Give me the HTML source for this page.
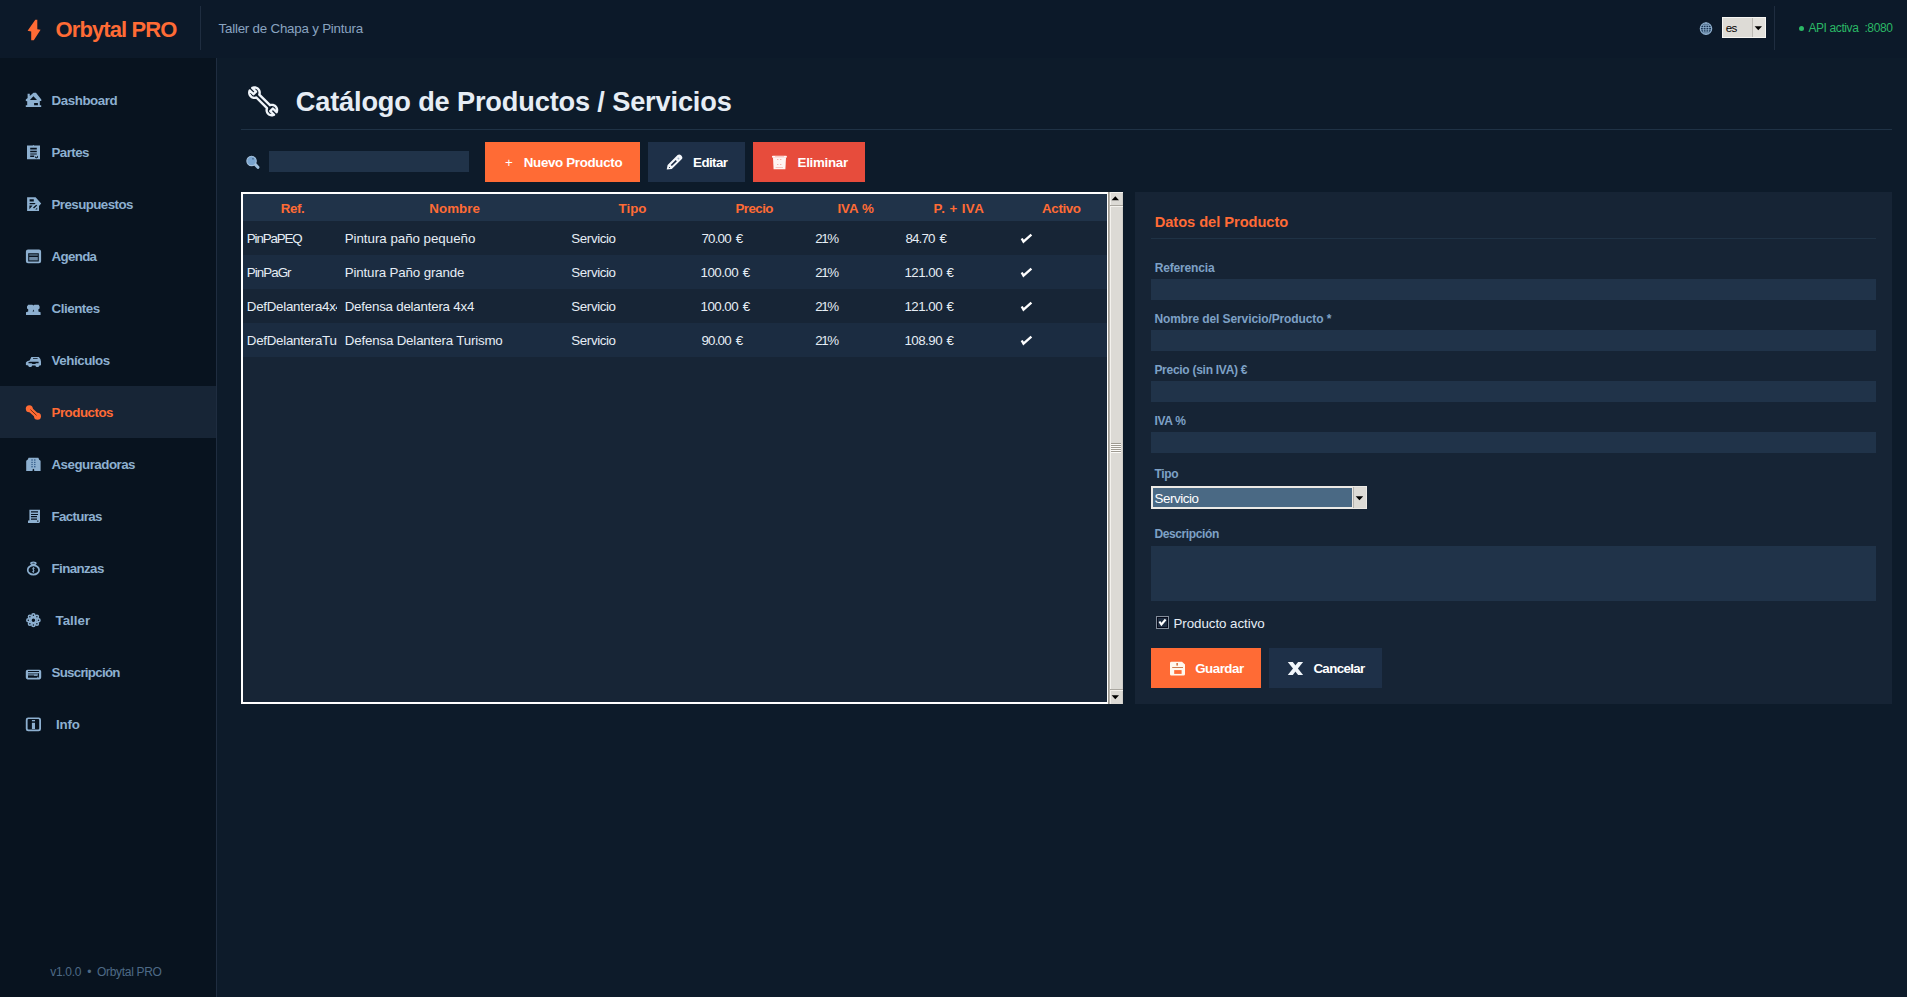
<!DOCTYPE html>
<html lang="es"><head><meta charset="utf-8"><title>Orbytal PRO</title>
<style>
html,body{margin:0;padding:0;background:#0d1b2a;}
body{width:1907px;height:997px;overflow:hidden;font-family:"Liberation Sans",sans-serif;}
#app{position:relative;width:1907px;height:997px;background:#0d1b2a;overflow:hidden;}
#app div,#app svg{position:absolute;}
.t{white-space:pre;line-height:1;}

</style></head>
<body>
<div id="app">
<div style="left:0;top:0;width:1907px;height:58px;background:#0c1929;"></div>
<div style="left:0;top:58px;width:216px;height:939px;background:#08131f;"></div>
<div style="left:216px;top:58px;width:1px;height:939px;background:#1f2d40;"></div>
<div style="left:200px;top:6px;width:1px;height:44px;background:#1f2d40;"></div>
<div style="left:1774px;top:6px;width:1px;height:44px;background:#1f2d40;"></div>
<div style="left:0;top:386px;width:216px;height:52px;background:#172536;"></div>
<!-- title separator -->
<div style="left:241px;top:129px;width:1651px;height:1px;background:#1f3245;"></div>
<!-- search -->
<div style="left:269px;top:151px;width:200px;height:21px;background:#203349;"></div>
<!-- buttons -->
<div style="left:485px;top:142px;width:155px;height:40px;background:#ff6b35;"></div>
<div style="left:648px;top:142px;width:97px;height:40px;background:#1e3048;"></div>
<div style="left:753px;top:142px;width:112px;height:40px;background:#e74c3c;"></div>
<!-- table -->
<div style="left:241px;top:192px;width:868px;height:512px;background:#ffffff;"></div>
<div style="left:243px;top:194px;width:864px;height:508px;background:#172536;"></div>
<div style="left:243px;top:194px;width:864px;height:27px;background:#203349;"></div>
<div style="left:243px;top:255px;width:864px;height:34px;background:#1b2c41;"></div>
<div style="left:243px;top:323px;width:864px;height:34px;background:#1b2c41;"></div>
<!-- panel -->
<div style="left:1135px;top:192px;width:757px;height:512px;background:#162435;"></div>
<div style="left:1151px;top:238px;width:725px;height:1px;background:#1f3245;"></div>
<div style="left:1151px;top:279px;width:725px;height:21px;background:#203349;"></div>
<div style="left:1151px;top:330px;width:725px;height:21px;background:#203349;"></div>
<div style="left:1151px;top:381px;width:725px;height:21px;background:#203349;"></div>
<div style="left:1151px;top:432px;width:725px;height:21px;background:#203349;"></div>
<div style="left:1151px;top:546px;width:725px;height:55px;background:#203349;"></div>
<div style="left:1151px;top:648px;width:110px;height:40px;background:#ff6b35;"></div>
<div style="left:1269px;top:648px;width:113px;height:40px;background:#1e3048;"></div>
<!-- bolt -->
<svg style="left:20px;top:12px;" width="30" height="34" viewBox="20 12 30 34"><polygon fill="#ff6b35" points="35.3,19.7 37.3,19.7 37.3,29.2 40.6,29.7 33.8,40.3 31.2,40.3 31.2,31.4 27.6,30.7"/></svg>
<!-- house -->
<svg style="left:21px;top:88px;" width="24" height="24" viewBox="21 88 24 24" fill="#8db0d0">
<path fill-rule="evenodd" d="M33.5 92.8 L36 92.8 L41.3 99.6 L41.3 101 L39.8 101 L39.8 105.2 L41.2 105.2 L41.2 107 L25.8 107 L25.8 105.2 L27.2 105.2 L27.2 101.2 L25.8 101 L25.8 99.6 L27.6 98 L27.6 93.8 L29.8 93.8 L29.8 96 Z M33.4 96.2 L29.9 99.9 L37 99.9 Z M34.1 103 L34.1 105.2 L37.9 105.2 L37.9 103 Z"/>
</svg>
<!-- clipboard -->
<svg style="left:21px;top:140px;" width="24" height="24" viewBox="21 140 24 24" fill="#8db0d0">
<path fill-rule="evenodd" d="M27 145.6 L32.6 145.6 L33.4 145 L34.2 145.6 L40 145.6 L40 159.3 L27 159.3 Z M30.2 147.8 L30.2 149.6 L36.8 149.6 L36.8 147.8 Z M30.2 150.8 L30.2 152.2 L36.8 152.2 L36.8 150.8 Z M30.2 153.4 L30.2 154.6 L36.8 154.6 L36.8 153.4 Z M30.2 155.6 L30.2 157 L34.2 157 L34.2 155.6 Z M35 156 L36.2 157.6 L38 155.6 L38 157.4 L36.2 158.6 L35 157.4Z"/>
</svg>
<!-- memo -->
<svg style="left:21px;top:192px;" width="24" height="24" viewBox="21 192 24 24" fill="#8db0d0">
<path fill-rule="evenodd" d="M27.1 197.2 L35.6 197.2 L41.2 203.4 L39 206 L39 211.1 L27.1 211.1 Z M29.6 199.3 L29.6 201.6 L33.8 201.6 L33.8 199.3 Z M29.6 203 L29.6 204.2 L34.6 204.2 L35.6 203 Z M29.4 205.6 L29.4 209.2 L32.6 205.6 Z M33 207.6 L34 208.4 L37.2 205.6 L36.2 204.8 Z M35.2 209.6 L37.2 209.6 L37.2 207.8 Z"/>
</svg>
<!-- calendar -->
<svg style="left:21px;top:244px;" width="24" height="24" viewBox="21 244 24 24" fill="#8db0d0">
<path fill-rule="evenodd" d="M28 249.5 H39 a2.1 2.1 0 0 1 2.1 2.1 V261.2 a2.1 2.1 0 0 1 -2.1 2.1 H28 a2.1 2.1 0 0 1 -2.1 -2.1 V251.6 a2.1 2.1 0 0 1 2.1 -2.1 Z M28.2 253.2 V261.4 H38.8 V253.2 Z"/>
<rect x="29.2" y="254.2" width="8.6" height="1.6" opacity="0.55"/>
<rect x="29.2" y="257" width="8.6" height="3.4" opacity="0.75"/>
</svg>
<!-- clients -->
<svg style="left:21px;top:296px;" width="24" height="24" viewBox="21 296 24 24" fill="#8db0d0">
<path d="M28.2 304.7 H32.4 L33.4 305.6 L34.4 304.7 H38.6 L39.6 306.4 V308.4 L38.4 309.2 V311.4 L40.6 312.2 V315 H26 V312.2 L28.2 311.4 V309.2 L27 308.4 V306.4 Z M33.4 309.6 L32.6 311.4 H34.2 Z" fill-rule="evenodd"/>
</svg>
<!-- car -->
<svg style="left:21px;top:348px;" width="24" height="24" viewBox="21 348 24 24" fill="#8db0d0">
<path fill-rule="evenodd" d="M31.4 356.9 H38.8 L40.4 359 L41 361.4 V365.2 L39.4 365.4 C39.2 366.6 38.2 366.9 37.4 366.9 C36.4 366.9 35.6 366.4 35.4 365.4 H32.2 C32 366.6 31 366.9 30.2 366.9 C29.2 366.9 28.4 366.4 28.2 365.4 L25.9 365 V362.4 L27.2 361.2 L29.6 360.4 Z M33 358.2 V359 H37.6 V358.2 Z M28.4 362.2 L28.4 363.3 L31.6 363.3 L32.4 364 H35.2 L36 363.3 H38.6 V361.8 H30 Z"/>
</svg>
<!-- small wrench (active) -->
<svg style="left:21px;top:400px;" width="24" height="24" viewBox="21 400 24 24">
<g fill="#ff6b35"><circle cx="29.3" cy="408.8" r="3.5"/><circle cx="37.5" cy="416.3" r="3.5"/><polygon points="30.6,406.6 40.2,415.4 36.4,418.6 26.8,409.8"/></g>
<line x1="30.4" y1="409.6" x2="36.6" y2="415.4" stroke="#6b2408" stroke-width="0.9"/>
</svg>
<!-- building -->
<svg style="left:21px;top:452px;" width="24" height="24" viewBox="21 452 24 24" fill="#8db0d0">
<path fill-rule="evenodd" d="M28.6 457.8 H38.4 L39.2 459.8 L40.6 460.8 V471 H34.2 V469.4 L33.4 468.8 L32.6 469.4 V471 H26.2 V460.8 L27.6 459.8 Z"/>
<g fill="#3d6591"><rect x="31.3" y="459.3" width="1.5" height="1.4"/><rect x="34" y="459.3" width="1.5" height="1.4"/><rect x="31.3" y="461.8" width="1.5" height="1.2"/><rect x="34" y="461.8" width="1.5" height="1.2"/><rect x="31.3" y="463.9" width="1.5" height="1.2"/><rect x="34" y="463.9" width="1.5" height="1.2"/><rect x="31.3" y="466" width="1.5" height="1.4"/><rect x="34" y="466" width="1.5" height="1.4"/></g>
</svg>
<!-- receipt -->
<svg style="left:21px;top:504px;" width="24" height="24" viewBox="21 504 24 24" fill="#8db0d0">
<path fill-rule="evenodd" d="M29.4 509.8 H40 V522 L39 523.1 H28 V520.4 H29.4 Z M31 511.2 V512.6 H38 V511.2 Z M31 514 V515 H38 V514 Z M31 516 V517.2 H37 V516 Z M31 518.6 V519.8 H37 V518.6 Z M37.2 520.4 V521.8 H38.4 V520.4Z"/>
</svg>
<!-- money bag -->
<svg style="left:21px;top:556px;" width="24" height="24" viewBox="21 556 24 24" fill="none" stroke="#8db0d0">
<ellipse cx="33.4" cy="570" rx="5.7" ry="4.6" stroke-width="1.7"/>
<path d="M30.6 566 L32.4 564.6 H34.4 L36.2 566" stroke-width="1.5"/>
<ellipse cx="33.4" cy="563.3" rx="2.6" ry="1.1" stroke-width="1.3"/>
<path d="M34.6 568.4 C33 567.4 32 568.6 33.4 569.8 C34.8 570.8 33.8 572.4 32.2 571.4 M33.4 567.2 V572.8" stroke-width="0.9"/>
</svg>
<!-- gear/flower -->
<svg style="left:21px;top:608px;" width="24" height="24" viewBox="21 608 24 24" fill="none" stroke="#8db0d0" stroke-width="1.5">
<g transform="translate(33.4 620.2)">
<circle r="2.6" stroke-width="1.7"/>
<circle cx="0" cy="-4.9" r="1.5"/><circle cx="3.5" cy="-3.5" r="1.5"/><circle cx="5.1" cy="0" r="1.5"/><circle cx="3.5" cy="3.5" r="1.5"/>
<circle cx="0" cy="4.9" r="1.5"/><circle cx="-3.5" cy="3.5" r="1.5"/><circle cx="-5.1" cy="0" r="1.5"/><circle cx="-3.5" cy="-3.5" r="1.5"/>
</g>
</svg>
<!-- card -->
<svg style="left:21px;top:660px;" width="24" height="24" viewBox="21 660 24 24" fill="#8db0d0">
<path fill-rule="evenodd" d="M27.6 669.8 H39.4 a1.8 1.8 0 0 1 1.8 1.8 V677.6 a1.8 1.8 0 0 1 -1.8 1.8 H27.6 a1.8 1.8 0 0 1 -1.8 -1.8 V671.6 a1.8 1.8 0 0 1 1.8 -1.8 Z M28 671 V672 H39 V671 Z M28 673.2 V677.8 H39 V673.2 Z"/>
<rect x="28" y="673.4" width="10" height="2.2" opacity="0.6"/>
<rect x="34" y="674.6" width="3.4" height="1.2" opacity="0.9"/>
<rect x="37" y="676.8" width="1.6" height="1" opacity="0.8"/>
</svg>
<!-- info -->
<svg style="left:21px;top:712px;" width="24" height="24" viewBox="21 712 24 24" fill="#8db0d0">
<path fill-rule="evenodd" d="M28.2 717.4 H38.6 a2.4 2.4 0 0 1 2.4 2.4 V728.9 a2.4 2.4 0 0 1 -2.4 2.4 H28.2 a2.4 2.4 0 0 1 -2.4 -2.4 V719.8 a2.4 2.4 0 0 1 2.4 -2.4 Z M28.6 719 a1 1 0 0 0 -1 1 V728.6 a1 1 0 0 0 1 1 H38.2 a1 1 0 0 0 1 -1 V720 a1 1 0 0 0 -1 -1 Z"/>
<rect x="31.9" y="720" width="3.1" height="1.3"/><rect x="31.9" y="722.8" width="3.1" height="6.2"/>
</svg>
<!-- title wrench -->
<svg style="left:242px;top:82px;" width="44" height="40" viewBox="242 82 44 40"><path d="M269.97,105.20 L270.46,105.04 L270.96,104.92 L271.47,104.86 L271.98,104.85 L272.49,104.89 L273.00,104.98 L273.49,105.12 L273.97,105.30 L274.43,105.53 L274.86,105.81 L275.27,106.13 L275.64,106.49 L275.97,106.88 L276.26,107.30 L276.51,107.75 L276.72,108.22 L276.87,108.71 L276.98,109.21 L277.04,109.72 L277.04,110.24 L277.00,110.75 L276.91,111.25 L276.76,111.75 L276.57,112.22 L272.84,108.49 L270.29,111.04 L274.02,114.77 L273.55,114.96 L273.05,115.11 L272.55,115.20 L272.04,115.24 L271.52,115.24 L271.01,115.18 L270.51,115.07 L270.02,114.92 L269.55,114.71 L269.10,114.46 L268.68,114.17 L268.29,113.84 L267.93,113.47 L267.61,113.06 L267.33,112.63 L267.10,112.17 L266.92,111.69 L266.78,111.20 L266.69,110.69 L266.65,110.18 L266.66,109.67 L266.72,109.16 L266.84,108.66 L267.00,108.17 L256.33,97.50 L255.84,97.66 L255.34,97.78 L254.83,97.84 L254.32,97.85 L253.81,97.81 L253.30,97.72 L252.81,97.58 L252.33,97.40 L251.87,97.17 L251.44,96.89 L251.03,96.57 L250.66,96.21 L250.33,95.82 L250.04,95.40 L249.79,94.95 L249.58,94.48 L249.43,93.99 L249.32,93.49 L249.26,92.98 L249.26,92.46 L249.30,91.95 L249.39,91.45 L249.54,90.95 L249.73,90.48 L253.46,94.21 L256.01,91.66 L252.28,87.93 L252.75,87.74 L253.25,87.59 L253.75,87.50 L254.26,87.46 L254.78,87.46 L255.29,87.52 L255.79,87.63 L256.28,87.78 L256.75,87.99 L257.20,88.24 L257.62,88.53 L258.01,88.86 L258.37,89.23 L258.69,89.64 L258.97,90.07 L259.20,90.53 L259.38,91.01 L259.52,91.50 L259.61,92.01 L259.65,92.52 L259.64,93.03 L259.58,93.54 L259.46,94.04 L259.30,94.53Z" fill="none" stroke="#f0f5fa" stroke-width="2.4" stroke-linejoin="round"/></svg>
<!-- magnifier -->
<svg style="left:241px;top:150px;" width="24" height="24" viewBox="241 150 24 24">
<line x1="255.2" y1="164.4" x2="257.9" y2="167.3" stroke="#9fc0de" stroke-width="3.1" stroke-linecap="round"/>
<circle cx="251.55" cy="160.95" r="4.7" fill="#7aa5cf" stroke="#a4c2de" stroke-width="1.1"/>
<rect x="252.2" y="158.4" width="1.6" height="0.9" fill="#2c4a66"/>
</svg>
<!-- pencil -->
<svg style="left:660px;top:148px;" width="30" height="28" viewBox="660 148 30 28">
<path d="M666.7 169.5 L667.6 165.1 L677.6 155.0 Q679.6 153.9 681.3 155.6 L682 156.4 Q683 158 681.9 159 L671.8 169.1 Z" fill="#f4f7fb"/>
<polygon points="670.7,164.9 675.7,160.0 676.9,161.2 671.9,166.1" fill="#1a2a44"/>
<circle cx="669.5" cy="167.5" r="0.55" fill="#1a2a44"/>
<polygon points="677.2,158.3 678.2,157.3 679.6,158.7 678.6,159.7" fill="#9fb0c6"/>
</svg>
<!-- trash -->
<svg style="left:765px;top:148px;" width="30" height="28" viewBox="765 148 30 28" fill="#fff5f3">
<rect x="772" y="155.7" width="14.9" height="2.1" rx="0.8"/>
<path d="M773 157.4 H786 L785.4 169.3 H773.6 Z"/>
<g fill="#f3b1a8"><rect x="777" y="159" width="1.4" height="0.9"/><rect x="780" y="159" width="1.4" height="0.9"/><rect x="777" y="164" width="1.4" height="0.9"/><rect x="780" y="164" width="1.4" height="0.9"/><rect x="775.6" y="167.2" width="7.4" height="0.7"/><rect x="775" y="156.2" width="9" height="0.6"/></g>
</svg>
<!-- floppy -->
<svg style="left:1162px;top:654px;" width="30" height="28" viewBox="1162 654 30 28">
<path d="M1171.4 661.8 H1182 L1185 664.4 V674.2 a1.4 1.4 0 0 1 -1.4 1.4 H1171.4 a1.4 1.4 0 0 1 -1.4 -1.4 V663.2 a1.4 1.4 0 0 1 1.4 -1.4 Z" fill="#fff8ee"/>
<rect x="1174.2" y="670.1" width="7.4" height="3.8" fill="#ff6b35"/>
<rect x="1172.2" y="667" width="10.8" height="0.9" fill="#c9703f"/>
<rect x="1176.4" y="663" width="1.5" height="2.6" fill="#d06a35"/>
</svg>
<!-- X -->
<svg style="left:1281px;top:654px;" width="30" height="28" viewBox="1281 654 30 28" fill="#f1f6fb">
<polygon points="1287.8,662 1292.8,662 1303.1,675.1 1298.1,675.1"/><polygon points="1303.1,662 1298.1,662 1287.8,675.1 1292.8,675.1"/>
</svg>
<!-- globe -->
<svg style="left:1696px;top:18px;" width="20" height="20" viewBox="1696 18 20 20" fill="none" stroke="#8eaecc" stroke-width="0.8">
<circle cx="1706" cy="28.6" r="5.7" fill="#1a3555" stroke-width="1.2"/>
<ellipse cx="1706" cy="28.6" rx="2.7" ry="5.7" stroke-width="0.95"/>
<line x1="1706" y1="22.8" x2="1706" y2="34.4" stroke-width="0.95"/>
<line x1="1701.6" y1="25.2" x2="1710.4" y2="25.2"/>
<line x1="1700.4" y1="27.5" x2="1711.6" y2="27.5"/>
<line x1="1700.4" y1="29.8" x2="1711.6" y2="29.8"/>
<line x1="1701.6" y1="32.1" x2="1710.4" y2="32.1"/>
</svg>
<!-- lang combobox -->
<div style="left:1722px;top:17px;width:42px;height:19px;border:1px solid #f6f5f2;background:#dddbd6;"></div>
<div style="left:1752px;top:18px;width:1px;height:19px;background:#bcbab4;"></div>
<div style="left:1753px;top:18px;width:12px;height:19px;background:#e3e1dc;"></div>
<svg style="left:1754px;top:25px;" width="9" height="6" viewBox="0 0 9 6"><polygon points="0.6,1.2 8,1.2 4.3,5.2" fill="#000"/></svg>
<!-- tipo combobox -->
<div style="left:1151px;top:486px;width:216px;height:23px;background:#eceae6;"></div>
<div style="left:1153px;top:488px;width:199px;height:19px;background:#4a6984;"></div>
<div style="left:1353px;top:487px;width:1px;height:21px;background:#b4b2ad;"></div>
<div style="left:1354px;top:487px;width:12px;height:21px;background:#dddbd6;"></div>
<svg style="left:1355px;top:495px;" width="9" height="6" viewBox="0 0 9 6"><polygon points="0.7,1.2 8.2,1.2 4.45,5.2" fill="#000"/></svg>
<!-- scrollbar -->
<div style="left:1109px;top:192px;width:14px;height:512px;background:#dcdad5;"></div>
<div style="left:1108px;top:192px;width:1px;height:512px;background:#9e9a91;"></div>
<div style="left:1109px;top:192px;width:1px;height:512px;background:#b6b3ad;"></div>
<div style="left:1110px;top:192px;width:1px;height:512px;background:#f4f2ee;"></div>
<div style="left:1122px;top:192px;width:1px;height:512px;background:#cfcdc8;"></div>
<div style="left:1110px;top:192px;width:13px;height:1px;background:#f4f2ee;"></div>
<div style="left:1110px;top:205px;width:13px;height:1px;background:#aaa7a0;"></div>
<div style="left:1110px;top:206px;width:13px;height:1px;background:#f4f2ee;"></div>
<div style="left:1110px;top:689px;width:13px;height:1px;background:#aaa7a0;"></div>
<div style="left:1110px;top:690px;width:13px;height:1px;background:#f4f2ee;"></div>
<svg style="left:1111.2px;top:194.5px;" width="9" height="7" viewBox="0 0 9 7"><polygon points="0.6,5.2 8,5.2 4.3,1.2" fill="#000"/></svg>
<svg style="left:1111.2px;top:693.5px;" width="9" height="7" viewBox="0 0 9 7"><polygon points="0.6,1.2 8,1.2 4.3,5.2" fill="#000"/></svg>
<div style="left:1111px;top:443px;width:10px;height:1px;background:#9e9a91;box-shadow:0 1px 0 #fbfaf8,0 2px 0 #9e9a91,0 3px 0 #fbfaf8,0 4px 0 #9e9a91,0 5px 0 #fbfaf8,0 6px 0 #9e9a91,0 7px 0 #fbfaf8,0 8px 0 #9e9a91,0 9px 0 #fbfaf8;"></div>
<!-- table checks -->
<svg style="left:1017px;top:221px;" width="20" height="136" viewBox="1017 221 20 136" fill="none" stroke="#ffffff" stroke-width="2.35">
<polyline points="1021.7,238.5 1023.5,241.7 1031.4,234.6"/>
<polyline points="1021.7,272.5 1023.5,275.7 1031.4,268.6"/>
<polyline points="1021.7,306.5 1023.5,309.7 1031.4,302.6"/>
<polyline points="1021.7,340.5 1023.5,343.7 1031.4,336.6"/>
</svg>
<!-- checkbox -->
<div style="left:1156px;top:616px;width:11px;height:11px;border:1px solid #838d9b;background:#1d2c40;box-shadow:inset 0 0 0 1px #050a1a;"></div>
<svg style="left:1156px;top:616px;" width="13" height="13" viewBox="1156 616 13 13"><polyline points="1159.4,621.5 1161.4,624.5 1165.6,619.5" fill="none" stroke="#fff" stroke-width="2.1"/></svg>
<div style="left:1798.8px;top:25.8px;width:5.4px;height:5.4px;border-radius:50%;background:#2bb866;"></div>

<div class="t" style="left:55.60px;top:19.08px;font-size:22.00px;letter-spacing:-0.910px;color:#ff6b35;font-weight:bold;">Orbytal PRO</div>
<div class="t" style="left:218.50px;top:22.21px;font-size:13.33px;letter-spacing:-0.210px;color:#8aa4c0;">Taller de Chapa y Pintura</div>
<div class="t" style="left:1725.80px;top:21.98px;font-size:11.60px;letter-spacing:-0.800px;color:#000000;">es</div>
<div class="t" style="left:1808.40px;top:21.84px;font-size:12.00px;letter-spacing:-0.390px;color:#2bb866;">API activa  :8080</div>
<div class="t" style="left:51.50px;top:93.51px;font-size:13.33px;letter-spacing:-0.422px;color:#8db0d0;font-weight:bold;">Dashboard</div>
<div class="t" style="left:51.50px;top:145.51px;font-size:13.33px;letter-spacing:-0.568px;color:#8db0d0;font-weight:bold;">Partes</div>
<div class="t" style="left:51.50px;top:197.51px;font-size:13.33px;letter-spacing:-0.566px;color:#8db0d0;font-weight:bold;">Presupuestos</div>
<div class="t" style="left:51.50px;top:249.51px;font-size:13.33px;letter-spacing:-0.672px;color:#8db0d0;font-weight:bold;">Agenda</div>
<div class="t" style="left:51.50px;top:301.51px;font-size:13.33px;letter-spacing:-0.448px;color:#8db0d0;font-weight:bold;">Clientes</div>
<div class="t" style="left:51.50px;top:353.51px;font-size:13.33px;letter-spacing:-0.439px;color:#8db0d0;font-weight:bold;">Vehículos</div>
<div class="t" style="left:51.50px;top:405.51px;font-size:13.33px;letter-spacing:-0.487px;color:#ff6b35;font-weight:bold;">Productos</div>
<div class="t" style="left:51.50px;top:457.51px;font-size:13.33px;letter-spacing:-0.510px;color:#8db0d0;font-weight:bold;">Aseguradoras</div>
<div class="t" style="left:51.50px;top:509.51px;font-size:13.33px;letter-spacing:-0.678px;color:#8db0d0;font-weight:bold;">Facturas</div>
<div class="t" style="left:51.50px;top:561.51px;font-size:13.33px;letter-spacing:-0.602px;color:#8db0d0;font-weight:bold;">Finanzas</div>
<div class="t" style="left:55.60px;top:613.51px;font-size:13.33px;letter-spacing:-0.017px;color:#8db0d0;font-weight:bold;">Taller</div>
<div class="t" style="left:51.50px;top:665.51px;font-size:13.33px;letter-spacing:-0.734px;color:#8db0d0;font-weight:bold;">Suscripción</div>
<div class="t" style="left:55.90px;top:717.51px;font-size:13.33px;letter-spacing:-0.161px;color:#8db0d0;font-weight:bold;">Info</div>
<div class="t" style="left:50.30px;top:965.74px;font-size:12.00px;letter-spacing:-0.315px;color:#4e6a86;">v1.0.0  •  Orbytal PRO</div>
<div class="t" style="left:295.70px;top:87.98px;font-size:27.20px;letter-spacing:-0.157px;color:#e6edf5;font-weight:bold;">Catálogo de Productos / Servicios</div>
<div class="t" style="left:504.90px;top:155.71px;font-size:13.33px;letter-spacing:-0.900px;color:#ffffff;">+</div>
<div class="t" style="left:523.80px;top:155.71px;font-size:13.33px;letter-spacing:-0.322px;color:#ffffff;font-weight:bold;">Nuevo Producto</div>
<div class="t" style="left:693.10px;top:155.71px;font-size:13.33px;letter-spacing:-0.597px;color:#ffffff;font-weight:bold;">Editar</div>
<div class="t" style="left:797.60px;top:155.71px;font-size:13.33px;letter-spacing:-0.300px;color:#ffffff;font-weight:bold;">Eliminar</div>
<div class="t" style="left:280.80px;top:202.11px;font-size:13.33px;letter-spacing:-0.425px;color:#ff6b35;font-weight:bold;">Ref.</div>
<div class="t" style="left:429.30px;top:202.11px;font-size:13.33px;letter-spacing:0.031px;color:#ff6b35;font-weight:bold;">Nombre</div>
<div class="t" style="left:618.60px;top:202.11px;font-size:13.33px;letter-spacing:-0.015px;color:#ff6b35;font-weight:bold;">Tipo</div>
<div class="t" style="left:735.50px;top:202.11px;font-size:13.33px;letter-spacing:-0.561px;color:#ff6b35;font-weight:bold;">Precio</div>
<div class="t" style="left:837.40px;top:202.11px;font-size:13.33px;letter-spacing:0.017px;color:#ff6b35;font-weight:bold;">IVA %</div>
<div class="t" style="left:933.60px;top:202.11px;font-size:13.33px;letter-spacing:0.419px;color:#ff6b35;font-weight:bold;">P. + IVA</div>
<div class="t" style="left:1042.10px;top:202.11px;font-size:13.33px;letter-spacing:-0.378px;color:#ff6b35;font-weight:bold;">Activo</div>
<div class="t" style="left:246.80px;top:231.61px;font-size:13.33px;letter-spacing:-1.135px;color:#e6edf5;">PinPaPEQ</div>
<div class="t" style="left:344.70px;top:231.61px;font-size:13.33px;letter-spacing:-0.029px;color:#e6edf5;">Pintura paño pequeño</div>
<div class="t" style="left:571.30px;top:231.61px;font-size:13.33px;letter-spacing:-0.384px;color:#e6edf5;">Servicio</div>
<div class="t" style="left:701.50px;top:231.61px;font-size:13.33px;letter-spacing:-0.810px;color:#e6edf5;">70.00</div>
<div class="t" style="left:735.70px;top:231.61px;font-size:13.33px;letter-spacing:0.000px;color:#e6edf5;">€</div>
<div class="t" style="left:815.30px;top:231.61px;font-size:13.33px;letter-spacing:-1.462px;color:#e6edf5;">21%</div>
<div class="t" style="left:905.40px;top:231.61px;font-size:13.33px;letter-spacing:-0.810px;color:#e6edf5;">84.70</div>
<div class="t" style="left:939.50px;top:231.61px;font-size:13.33px;letter-spacing:0.000px;color:#e6edf5;">€</div>
<div class="t" style="left:246.80px;top:265.61px;font-size:13.33px;letter-spacing:-0.939px;color:#e6edf5;">PinPaGr</div>
<div class="t" style="left:344.70px;top:265.61px;font-size:13.33px;letter-spacing:-0.136px;color:#e6edf5;">Pintura Paño grande</div>
<div class="t" style="left:571.30px;top:265.61px;font-size:13.33px;letter-spacing:-0.384px;color:#e6edf5;">Servicio</div>
<div class="t" style="left:700.50px;top:265.61px;font-size:13.33px;letter-spacing:-0.531px;color:#e6edf5;">100.00</div>
<div class="t" style="left:742.70px;top:265.61px;font-size:13.33px;letter-spacing:0.000px;color:#e6edf5;">€</div>
<div class="t" style="left:815.30px;top:265.61px;font-size:13.33px;letter-spacing:-1.462px;color:#e6edf5;">21%</div>
<div class="t" style="left:904.40px;top:265.61px;font-size:13.33px;letter-spacing:-0.511px;color:#e6edf5;">121.00</div>
<div class="t" style="left:946.60px;top:265.61px;font-size:13.33px;letter-spacing:0.000px;color:#e6edf5;">€</div>
<div class="t" style="left:246.80px;top:299.61px;font-size:13.33px;letter-spacing:-0.270px;color:#e6edf5;width:90.7px;overflow:hidden;">DefDelantera4x4</div>
<div class="t" style="left:344.70px;top:299.61px;font-size:13.33px;letter-spacing:-0.225px;color:#e6edf5;">Defensa delantera 4x4</div>
<div class="t" style="left:571.30px;top:299.61px;font-size:13.33px;letter-spacing:-0.384px;color:#e6edf5;">Servicio</div>
<div class="t" style="left:700.50px;top:299.61px;font-size:13.33px;letter-spacing:-0.531px;color:#e6edf5;">100.00</div>
<div class="t" style="left:742.70px;top:299.61px;font-size:13.33px;letter-spacing:0.000px;color:#e6edf5;">€</div>
<div class="t" style="left:815.30px;top:299.61px;font-size:13.33px;letter-spacing:-1.462px;color:#e6edf5;">21%</div>
<div class="t" style="left:904.40px;top:299.61px;font-size:13.33px;letter-spacing:-0.511px;color:#e6edf5;">121.00</div>
<div class="t" style="left:946.60px;top:299.61px;font-size:13.33px;letter-spacing:0.000px;color:#e6edf5;">€</div>
<div class="t" style="left:246.80px;top:333.61px;font-size:13.33px;letter-spacing:-0.270px;color:#e6edf5;width:90.7px;overflow:hidden;">DefDelanteraTurismo</div>
<div class="t" style="left:344.70px;top:333.61px;font-size:13.33px;letter-spacing:-0.173px;color:#e6edf5;">Defensa Delantera Turismo</div>
<div class="t" style="left:571.30px;top:333.61px;font-size:13.33px;letter-spacing:-0.384px;color:#e6edf5;">Servicio</div>
<div class="t" style="left:701.50px;top:333.61px;font-size:13.33px;letter-spacing:-0.810px;color:#e6edf5;">90.00</div>
<div class="t" style="left:735.70px;top:333.61px;font-size:13.33px;letter-spacing:0.000px;color:#e6edf5;">€</div>
<div class="t" style="left:815.30px;top:333.61px;font-size:13.33px;letter-spacing:-1.462px;color:#e6edf5;">21%</div>
<div class="t" style="left:904.40px;top:333.61px;font-size:13.33px;letter-spacing:-0.511px;color:#e6edf5;">108.90</div>
<div class="t" style="left:946.60px;top:333.61px;font-size:13.33px;letter-spacing:0.000px;color:#e6edf5;">€</div>
<div class="t" style="left:1154.70px;top:215.08px;font-size:14.67px;letter-spacing:-0.048px;color:#ff6b35;font-weight:bold;">Datos del Producto</div>
<div class="t" style="left:1154.70px;top:261.84px;font-size:12.00px;letter-spacing:-0.155px;color:#7ea1c6;font-weight:bold;">Referencia</div>
<div class="t" style="left:1154.40px;top:312.84px;font-size:12.00px;letter-spacing:-0.106px;color:#7ea1c6;font-weight:bold;">Nombre del Servicio/Producto *</div>
<div class="t" style="left:1154.40px;top:363.84px;font-size:12.00px;letter-spacing:-0.278px;color:#7ea1c6;font-weight:bold;">Precio (sin IVA) €</div>
<div class="t" style="left:1154.40px;top:414.84px;font-size:12.00px;letter-spacing:-0.262px;color:#7ea1c6;font-weight:bold;">IVA %</div>
<div class="t" style="left:1154.40px;top:467.54px;font-size:12.00px;letter-spacing:-0.326px;color:#7ea1c6;font-weight:bold;">Tipo</div>
<div class="t" style="left:1154.40px;top:491.91px;font-size:13.33px;letter-spacing:-0.399px;color:#ffffff;">Servicio</div>
<div class="t" style="left:1154.40px;top:527.64px;font-size:12.00px;letter-spacing:-0.376px;color:#7ea1c6;font-weight:bold;">Descripción</div>
<div class="t" style="left:1173.40px;top:616.61px;font-size:13.33px;letter-spacing:-0.039px;color:#e6edf5;">Producto activo</div>
<div class="t" style="left:1195.20px;top:661.91px;font-size:13.33px;letter-spacing:-0.494px;color:#ffffff;font-weight:bold;">Guardar</div>
<div class="t" style="left:1313.40px;top:661.91px;font-size:13.33px;letter-spacing:-0.646px;color:#ffffff;font-weight:bold;">Cancelar</div>
</div>
</body></html>
